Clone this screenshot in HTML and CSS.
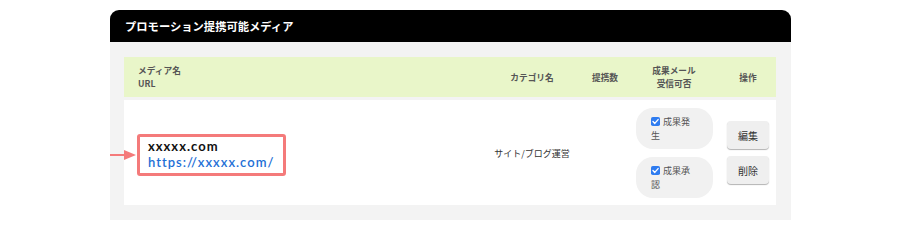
FILE: index.html
```html
<!DOCTYPE html>
<html lang="ja">
<head>
<meta charset="utf-8">
<title>プロモーション提携可能メディア</title>
<link rel="stylesheet" href="styles.css">
</head>
<body>
<div class="page">
  <section class="card">
    <h2 class="card-title">プロモーション提携可能メディア</h2>
    <div class="card-body">
      <div class="table">
        <div class="row head">
          <div class="cell name">メディア名<br>URL</div>
          <div class="cell center">カテゴリ名</div>
          <div class="cell center">提携数</div>
          <div class="cell center">成果メール<br>受信可否</div>
          <div class="cell center ops">操作</div>
        </div>
        <div class="row body">
          <div class="cell name">
            <div class="highlight">
              <span class="arrow"><svg width="40" height="12" viewBox="0 0 40 12"><line x1="0" y1="6" x2="30" y2="6" stroke="#f47a7a" stroke-width="1.8"/><polygon points="27,1 39,6 27,11" fill="#f47a7a"/></svg></span>
              <div class="site">xxxxx.com</div>
              <a class="url" href="#">https://xxxxx.com/</a>
            </div>
          </div>
          <div class="cell center cat">サイト/ブログ運営</div>
          <div class="cell center"></div>
          <div class="cell center mail">
            <label class="pill"><span class="check"><svg width="9" height="9" viewBox="0 0 9 9"><rect width="9" height="9" rx="1.8" fill="#2f7cf0"/><path d="M2 4.6 L3.8 6.4 L7.1 2.6" fill="none" stroke="#fff" stroke-width="1.4" stroke-linecap="round" stroke-linejoin="round"/></svg></span>成果発生</label>
            <label class="pill"><span class="check"><svg width="9" height="9" viewBox="0 0 9 9"><rect width="9" height="9" rx="1.8" fill="#2f7cf0"/><path d="M2 4.6 L3.8 6.4 L7.1 2.6" fill="none" stroke="#fff" stroke-width="1.4" stroke-linecap="round" stroke-linejoin="round"/></svg></span>成果承認</label>
          </div>
          <div class="cell center ops">
            <button class="btn">編集</button>
            <button class="btn">削除</button>
          </div>
        </div>
      </div>
    </div>
  </section>
</div>
</body>
</html>
```

FILE: styles.css
```css
html, body {
  margin: 0;
  padding: 0;
  background: #fff;
}
body {
  font-family: "Noto Sans CJK JP", "Noto Sans", sans-serif;
  color: #333;
}
.page {
  padding: 10px 109px 0 110px;
}
.card {
  width: 681px;
  border-radius: 9px 9px 0 0;
  overflow: hidden;
  background: #f3f3f3;
}
.card-title {
  margin: 0;
  height: 32px;
  line-height: 32px;
  background: #000;
  color: #fff;
  font-size: 11.3px;
  font-weight: 700;
  padding-left: 15px;
}
.card-body {
  padding: 15px 15px 15px 14px;
}
.table {
  display: flex;
  flex-direction: column;
  gap: 3px;
}
.row {
  display: grid;
  grid-template-columns: 366px 84px 62px 76px 64px;
  align-items: center;
}
.row.head {
  background: #e9f6c9;
  height: 40px;
  font-size: 8.7px;
  font-weight: 700;
  color: #555;
  line-height: 13px;
}
.row.body {
  background: #fff;
  height: 105px;
}
.cell.name {
  padding-left: 14px;
}
.row.body .cell.name {
  padding-left: 13px;
  padding-top: 5px;
}
.center {
  text-align: center;
}
.highlight {
  position: relative;
  width: 135px;
  border: 3px solid #f47a7a;
  border-radius: 3px;
  padding: 2px 0 2px 8px;
  line-height: 15.6px;
  font-family: "Lato", "Open Sans", sans-serif;
  font-size: 13px;
  letter-spacing: 1px;
}
.arrow {
  position: absolute;
  left: -43px;
  top: 12px;
  line-height: 0;
}
.site {
  color: #111;
  font-weight: 700;
}
.url {
  display: block;
  color: #1e6fd6;
  text-decoration: none;
  font-weight: 600;
}
.cat {
  font-size: 9px;
  color: #333;
  padding-top: 2px;
}
.mail {
  display: flex;
  flex-direction: column;
  gap: 8px;
  align-items: flex-start;
  padding-top: 1px;
}
.pill {
  display: block;
  box-sizing: border-box;
  width: 77px;
  height: 41px;
  padding: 7px 22px 7px 15px;
  background: #f1f1f1;
  border-radius: 17px;
  font-size: 9px;
  line-height: 13.5px;
  color: #555;
  text-align: left;
}
.check {
  display: inline-block;
  vertical-align: -1px;
  margin-right: 3px;
  line-height: 0;
}
.ops {
  display: flex;
  flex-direction: column;
  align-items: center;
  gap: 7px;
  padding-left: 8px;
}
.row.head .ops {
  display: block;
}
.btn {
  width: 42px;
  height: 28px;
  border: none;
  border-radius: 4px;
  background: #efefef;
  box-shadow: 0 1px 1px rgba(0,0,0,0.3);
  font-family: "Noto Sans CJK JP", sans-serif;
  font-size: 10px;
  color: #333;
  padding: 0;
}
```
